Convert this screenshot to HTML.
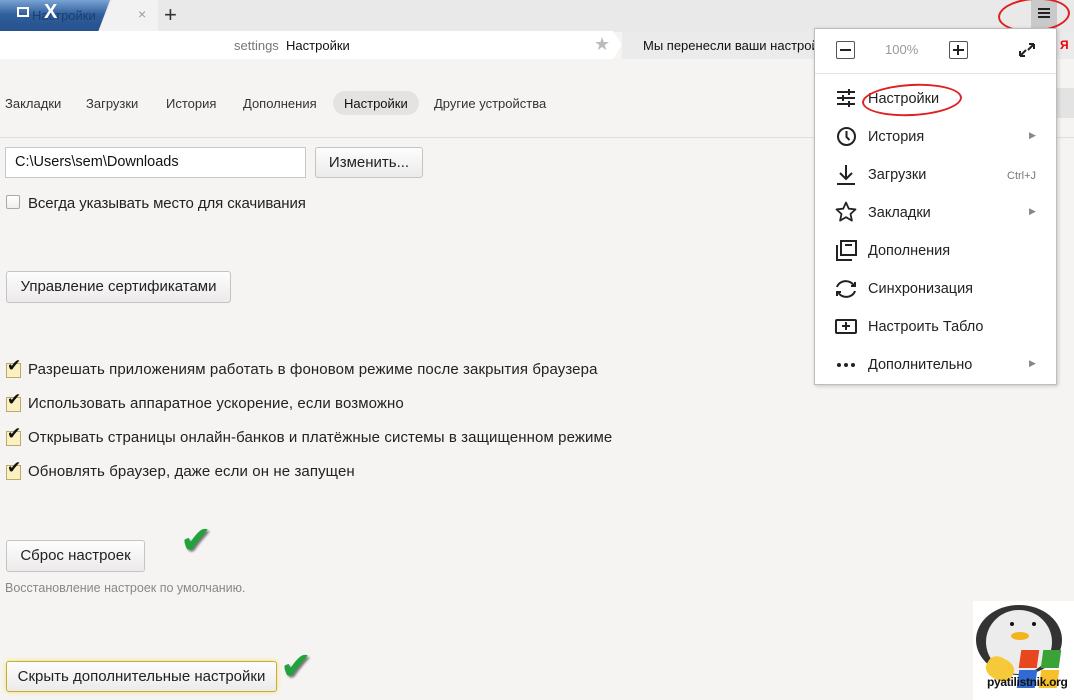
<!DOCTYPE html>
<html><head><meta charset="utf-8"><style>
*{margin:0;padding:0;box-sizing:border-box}
body{width:1074px;height:700px;overflow:hidden;background:#f5f4f2;font-family:"Liberation Sans","DejaVu Sans",sans-serif;color:#222;position:relative}
.a{position:absolute;white-space:nowrap}
.btn{position:absolute;border:1px solid #c4c4c4;border-radius:3px;background:linear-gradient(#fdfdfd,#eceaea);font-size:15px;color:#222;text-align:center}
.cb{position:absolute;width:14px;height:14px;border:1px solid #a8a8a8;border-radius:2px;background:linear-gradient(#fff,#eee)}
.ck{position:absolute;width:15px;height:15px;border:1px solid #b9a970;background:#fbf1c0}
.cm{position:absolute;font-size:17px;color:#111;font-weight:bold}
.t{position:absolute;white-space:nowrap;font-size:15px;color:#222;letter-spacing:-0.1px}
.mi{position:absolute;left:868px;font-size:14.5px;color:#222}
</style></head><body>
<!-- tab bar -->
<div class="a" style="left:0;top:0;width:1074px;height:32px;background:#e9e9e9"></div>
<div class="a" style="left:0;top:0;width:110px;height:32px;background:linear-gradient(#7aa3d4,#2f5f9c 45%,#25508c);clip-path:polygon(0 0,110px 0,98px 32px,0 32px)"></div>
<div class="a" style="left:32px;top:8px;font-size:13px;color:#1c3e6e">Настройки</div>
<div class="a" style="left:17px;top:7px;width:12px;height:10px;border:2px solid #fff"></div>
<div class="a" style="left:44px;top:1px;font-size:20px;font-weight:bold;color:#fff">X</div>
<div class="a" style="left:98px;top:0;width:60px;height:32px;background:#f2f2f2;clip-path:polygon(14px 0,60px 0,60px 32px,0 32px)"></div>
<div class="a" style="left:138px;top:6px;font-size:14px;color:#999">×</div>
<div class="a" style="left:164px;top:2px;font-size:22px;color:#333">+</div>
<!-- address bar -->
<div class="a" style="left:0;top:31px;width:622px;height:28px;background:#fff;clip-path:polygon(0 0,613px 0,622px 14px,613px 28px,0 28px)"></div>
<div class="a" style="left:234px;top:38px;font-size:13px;color:#777">settings <span style="color:#111">&nbsp;Настройки</span></div>
<div class="a" style="left:594px;top:34px;font-size:18px;color:#bbb">★</div>
<div class="a" style="left:622px;top:31px;width:452px;height:28px;background:#ebebeb"></div>
<div class="a" style="left:643px;top:38px;font-size:13px;color:#111">Мы перенесли ваши настрой</div>
<div class="a" style="left:1060px;top:38px;font-size:12px;color:#e00;font-weight:bold">Я</div>
<div class="a" style="left:1031px;top:0;width:26px;height:28px;background:#c9c9c9"></div>
<div class="a" style="left:1038px;top:8px;width:12px;height:2px;background:#222;box-shadow:0 4px 0 #222,0 8px 0 #222"></div>
<div class="a" style="left:998px;top:-2px;width:72px;height:34px;border:2px solid #e02020;border-radius:50%;transform:rotate(-4deg)"></div>
<!-- nav -->
<div class="a" style="left:333px;top:91px;width:86px;height:24px;border-radius:12px;background:#e4e3e1"></div>
<div class="a" style="left:5px;top:96px;font-size:13px;color:#333">Закладки</div>
<div class="a" style="left:86px;top:96px;font-size:13px;color:#333">Загрузки</div>
<div class="a" style="left:166px;top:96px;font-size:13px;color:#333">История</div>
<div class="a" style="left:243px;top:96px;font-size:13px;color:#333">Дополнения</div>
<div class="a" style="left:344px;top:96px;font-size:13px;color:#111">Настройки</div>
<div class="a" style="left:434px;top:96px;font-size:13px;color:#333">Другие устройства</div>
<div class="a" style="left:0;top:137px;width:1074px;height:1px;background:#dedede"></div>
<div class="a" style="left:1056px;top:88px;width:18px;height:30px;background:#e3e3e3"></div>
<!-- content -->
<div class="a" style="left:5px;top:147px;width:301px;height:31px;background:#fff;border:1px solid #c8c8c8"></div>
<div class="a" style="left:15px;top:154px;font-size:14.5px;color:#111">C:\Users\sem\Downloads</div>
<div class="btn" style="left:315px;top:147px;width:108px;height:31px;line-height:29px">Изменить...</div>
<div class="cb" style="left:6px;top:195px"></div>
<div class="t" style="left:28px;top:195px">Всегда указывать место для скачивания</div>
<div class="btn" style="left:6px;top:271px;width:225px;height:32px;line-height:30px">Управление сертификатами</div>
<div class="ck" style="left:6px;top:363px"></div><div class="cm" style="left:7px;top:356px">✔</div>
<div class="t" style="left:28px;top:361px;letter-spacing:0.1px">Разрешать приложениям работать в фоновом режиме после закрытия браузера</div>
<div class="ck" style="left:6px;top:397px"></div><div class="cm" style="left:7px;top:390px">✔</div>
<div class="t" style="left:28px;top:395px;letter-spacing:0.1px">Использовать аппаратное ускорение, если возможно</div>
<div class="ck" style="left:6px;top:431px"></div><div class="cm" style="left:7px;top:424px">✔</div>
<div class="t" style="left:28px;top:429px;letter-spacing:0.1px">Открывать страницы онлайн-банков и платёжные системы в защищенном режиме</div>
<div class="ck" style="left:6px;top:465px"></div><div class="cm" style="left:7px;top:458px">✔</div>
<div class="t" style="left:28px;top:463px;letter-spacing:0.1px">Обновлять браузер, даже если он не запущен</div>
<div class="btn" style="left:6px;top:540px;width:139px;height:32px;line-height:30px">Сброс настроек</div>
<div class="a" style="left:180px;top:518px;font-size:38px;color:#1fa33a;text-shadow:2px 2px 2px #777">✔</div>
<div class="a" style="left:5px;top:581px;font-size:12.5px;color:#888">Восстановление настроек по умолчанию.</div>
<div class="btn" style="left:6px;top:661px;width:271px;height:31px;line-height:29px;border-color:#c9ad33;box-shadow:0 0 5px #f5e070">Скрыть дополнительные настройки</div>
<div class="a" style="left:280px;top:644px;font-size:38px;color:#1fa33a;text-shadow:2px 2px 2px #777">✔</div>
<!-- penguin logo -->
<div class="a" style="left:973px;top:601px;width:101px;height:99px;background:#fff"></div>
<div class="a" style="left:976px;top:605px;width:86px;height:70px;border-radius:50%;background:#333"></div>
<div class="a" style="left:986px;top:610px;width:66px;height:64px;border-radius:50%;background:#ececec"></div>
<div class="a" style="left:1010px;top:622px;width:4px;height:4px;border-radius:50%;background:#111;box-shadow:22px 0 0 #111"></div>
<div class="a" style="left:1011px;top:632px;width:18px;height:8px;border-radius:50%;background:#f2b51e"></div>
<div class="a" style="left:986px;top:658px;width:28px;height:22px;border-radius:40%;background:#f5c93a;transform:rotate(30deg)"></div>
<div class="a" style="left:1020px;top:650px;width:18px;height:18px;background:#e8461f;transform:skew(-8deg)"></div>
<div class="a" style="left:1042px;top:650px;width:18px;height:18px;background:#3aa335;transform:skew(-8deg)"></div>
<div class="a" style="left:1018px;top:670px;width:18px;height:18px;background:#2f6bd3;transform:skew(-8deg)"></div>
<div class="a" style="left:1040px;top:670px;width:18px;height:18px;background:#f5c02a;transform:skew(-8deg)"></div>
<div class="a" style="left:987px;top:675px;font-size:12px;font-weight:bold;color:#111;letter-spacing:-0.3px">pyatilistnik.org</div>
<!-- dropdown menu -->
<div class="a" style="left:814px;top:28px;width:243px;height:357px;background:#fff;border:1px solid #bdbdbd;box-shadow:1px 1px 4px rgba(0,0,0,.2)"></div>
<div class="a" style="left:836px;top:41px;width:19px;height:18px;border:1px solid #555;border-radius:2px"></div>
<div class="a" style="left:840px;top:49px;width:11px;height:2px;background:#222"></div>
<div class="a" style="left:885px;top:42px;font-size:13px;color:#999">100%</div>
<div class="a" style="left:949px;top:41px;width:19px;height:18px;border:1px solid #555;border-radius:2px"></div>
<div class="a" style="left:953px;top:49px;width:11px;height:2px;background:#222"></div>
<div class="a" style="left:957px;top:45px;width:2px;height:10px;background:#222"></div>
<svg class="a" style="left:1017px;top:41px" width="20" height="18" viewBox="0 0 20 18"><path d="M3 15L9 9M3 15v-5M3 15h5M17 3l-6 6M17 3v5M17 3h-5" stroke="#222" stroke-width="2" fill="none"/></svg>
<div class="a" style="left:815px;top:73px;width:241px;height:1px;background:#e3e3e3"></div>
<svg class="a" style="left:836px;top:88px" width="20" height="20" viewBox="0 0 20 20"><path d="M1 4h18M1 10h18M1 16h18M13 1v6M7 7v6M13 13v6" stroke="#222" stroke-width="2" fill="none"/></svg>
<div class="mi" style="top:91px">Настройки</div>
<div class="a" style="left:862px;top:84px;width:100px;height:32px;border:2px solid #e02020;border-radius:50%;transform:rotate(-3deg)"></div>
<svg class="a" style="left:836px;top:126px" width="21" height="21" viewBox="0 0 21 21"><circle cx="10.5" cy="10.5" r="8.5" stroke="#222" stroke-width="2" fill="none"/><path d="M10.5 5v6l3 3" stroke="#222" stroke-width="2" fill="none"/></svg>
<div class="mi" style="top:129px">История</div>
<div class="a" style="left:1029px;top:130px;font-size:9px;color:#888">▶</div>
<svg class="a" style="left:836px;top:164px" width="20" height="22" viewBox="0 0 20 22"><path d="M10 1v14M4 9l6 6 6-6M1 20h18" stroke="#222" stroke-width="2" fill="none"/></svg>
<div class="mi" style="top:167px">Загрузки</div>
<div class="a" style="left:1007px;top:170px;font-size:11px;color:#777">Ctrl+J</div>
<svg class="a" style="left:835px;top:201px" width="22" height="22" viewBox="0 0 22 22"><path d="M11 1.5l2.8 6.2 6.7.7-5 4.6 1.4 6.6L11 16.2l-5.9 3.4 1.4-6.6-5-4.6 6.7-.7z" fill="none" stroke="#222" stroke-width="1.8" stroke-linejoin="round"/></svg>
<div class="mi" style="top:205px">Закладки</div>
<div class="a" style="left:1029px;top:206px;font-size:9px;color:#888">▶</div>
<svg class="a" style="left:836px;top:240px" width="21" height="21" viewBox="0 0 21 21"><rect x="5" y="1" width="15" height="14" fill="none" stroke="#222" stroke-width="2"/><path d="M1 5v15h15" fill="none" stroke="#222" stroke-width="2"/><path d="M9 5h7" stroke="#222" stroke-width="2"/></svg>
<div class="mi" style="top:243px">Дополнения</div>
<svg class="a" style="left:834px;top:278px" width="24" height="22" viewBox="0 0 24 22"><path d="M3 9a9 8 0 0 1 17-1M21 13a9 8 0 0 1-17 1" stroke="#222" stroke-width="2" fill="none"/><path d="M17 8h4V4M7 14H3v4" stroke="#222" stroke-width="2" fill="none"/></svg>
<div class="mi" style="top:281px">Синхронизация</div>
<div class="a" style="left:835px;top:319px;width:22px;height:15px;border:2px solid #222;border-radius:2px"></div>
<div class="a" style="left:842px;top:325px;width:8px;height:2px;background:#222"></div>
<div class="a" style="left:845px;top:322px;width:2px;height:8px;background:#222"></div>
<div class="mi" style="top:319px">Настроить Табло</div>
<div class="a" style="left:837px;top:363px;width:4px;height:4px;border-radius:50%;background:#222;box-shadow:7px 0 0 #222,14px 0 0 #222"></div>
<div class="mi" style="top:357px">Дополнительно</div>
<div class="a" style="left:1029px;top:358px;font-size:9px;color:#888">▶</div>
</body></html>
